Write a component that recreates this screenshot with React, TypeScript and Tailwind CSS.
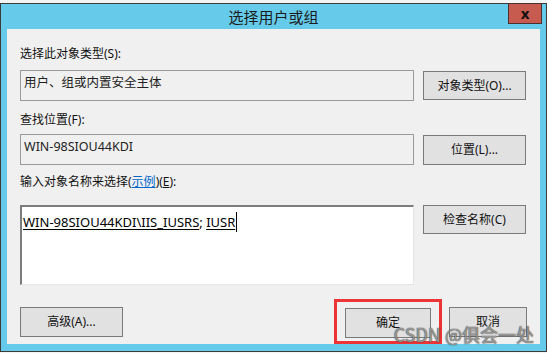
import React from 'react'

const ui = { fontFamily: '"Noto Sans", "Noto Sans CJK SC", sans-serif' }
const cjk = { fontFamily: '"Noto Sans CJK SC", "Noto Sans", sans-serif' }

function Btn({ label, className = '' }: { label: React.ReactNode; className?: string }) {
    return (
        <div
            className={`flex h-[30px] items-center justify-center border border-[#7a7a7a] bg-[#e1e1e1] text-[12px] leading-4 text-[#111] ${className}`}
        >
            {label}
        </div>
    )
}

function Field({ text }: { text: string }) {
    return (
        <div className="h-[31px] w-[394px] border border-[#9a9a9a] px-[3px] pt-[4px] text-[12.5px] leading-4 text-[#222]">
            {text}
        </div>
    )
}

export default function App() {
    return (
        <div className="h-[353px] w-[547px] overflow-hidden bg-[#f4f4f4] pt-[3px]" style={ui}>
            <div className="relative flex h-[349px] w-[547px] flex-col border border-[#3b3b3b] bg-[#66cbea]">
                {/* title bar */}
                <div className="flex h-[28px] items-center justify-center pt-[2px] text-[15px] text-[#1b1b1b]" style={cjk}>
                    选择用户或组
                </div>
                <div className="absolute right-[4px] top-[-1px] flex h-[21px] w-[34px] items-center justify-center border border-[#4d3030] bg-[#c75b50] text-[15px] font-bold leading-none text-[#111]">
                    x
                </div>

                {/* client area */}
                <div className="mx-[6px] mb-[7px] flex flex-1 flex-col bg-[#f0f0f0] px-[13px] pt-[17px]">
                    <div className="h-4 text-[12px] leading-4 text-[#111]">选择此对象类型(S):</div>
                    <div className="mt-[8px] flex items-center gap-[9px]">
                        <Field text="用户、组或内置安全主体" />
                        <Btn label="对象类型(O)..." className="w-[103px] !h-[29px]" />
                    </div>

                    <div className="mt-[11px] h-4 text-[12px] leading-4 text-[#111]">查找位置(F):</div>
                    <div className="mt-[6px] flex items-center gap-[9px]">
                        <Field text="WIN-98SIOU44KDI" />
                        <Btn label="位置(L)..." className="w-[103px] !h-[30px]" />
                    </div>

                    <div className="mt-[9px] h-4 text-[12px] leading-4 text-[#111]">
                        输入对象名称来选择(<span className="text-[#0066cc] underline">示例</span>)(<span className="underline">E</span>):
                    </div>
                    <div className="mt-[15px] flex items-start gap-[9px]">
                        <div className="h-[80px] w-[394px] border-l-2 border-t-2 border-b border-r border-l-[#7c7c7c] border-t-[#7c7c7c] border-b-[#e6e6e6] border-r-[#e6e6e6] bg-white pl-[1px] pt-[5px]">
                            <div className="flex items-center text-[13px] leading-5 text-black">
                                <span className="underline underline-offset-2">WIN-98SIOU44KDI\IIS_IUSRS</span>
                                <span>;&nbsp;</span>
                                <span className="underline underline-offset-2">IUSR</span>
                                <span className="ml-px inline-block h-[20px] w-px bg-black" />
                            </div>
                        </div>
                        <Btn label="检查名称(C)" className="w-[103px] !h-[29px]" />
                    </div>

                    <div className="mt-[14px] flex items-center">
                        <Btn label="高级(A)..." className="w-[103px]" />
                        <div className="flex-1" />
                        <div className="border-[3px] border-[#ee3535] px-[8px] pb-[3px] pt-[6px]">
                            <Btn label="确定" className="w-[86px]" />
                        </div>
                        <Btn label="取消" className="ml-[7px] w-[78px]" />
                    </div>
                </div>

                {/* watermark */}
                <div
                    className="pointer-events-none absolute bottom-[5px] right-[12px] text-[18px] leading-6 text-[rgba(255,255,255,0.5)] [text-shadow:0_0_1px_rgba(40,40,40,0.9),0_0_1px_rgba(40,40,40,0.9)]"
                    style={cjk}
                >
                    CSDN @俱会一处
                </div>
            </div>
        </div>
    )
}
